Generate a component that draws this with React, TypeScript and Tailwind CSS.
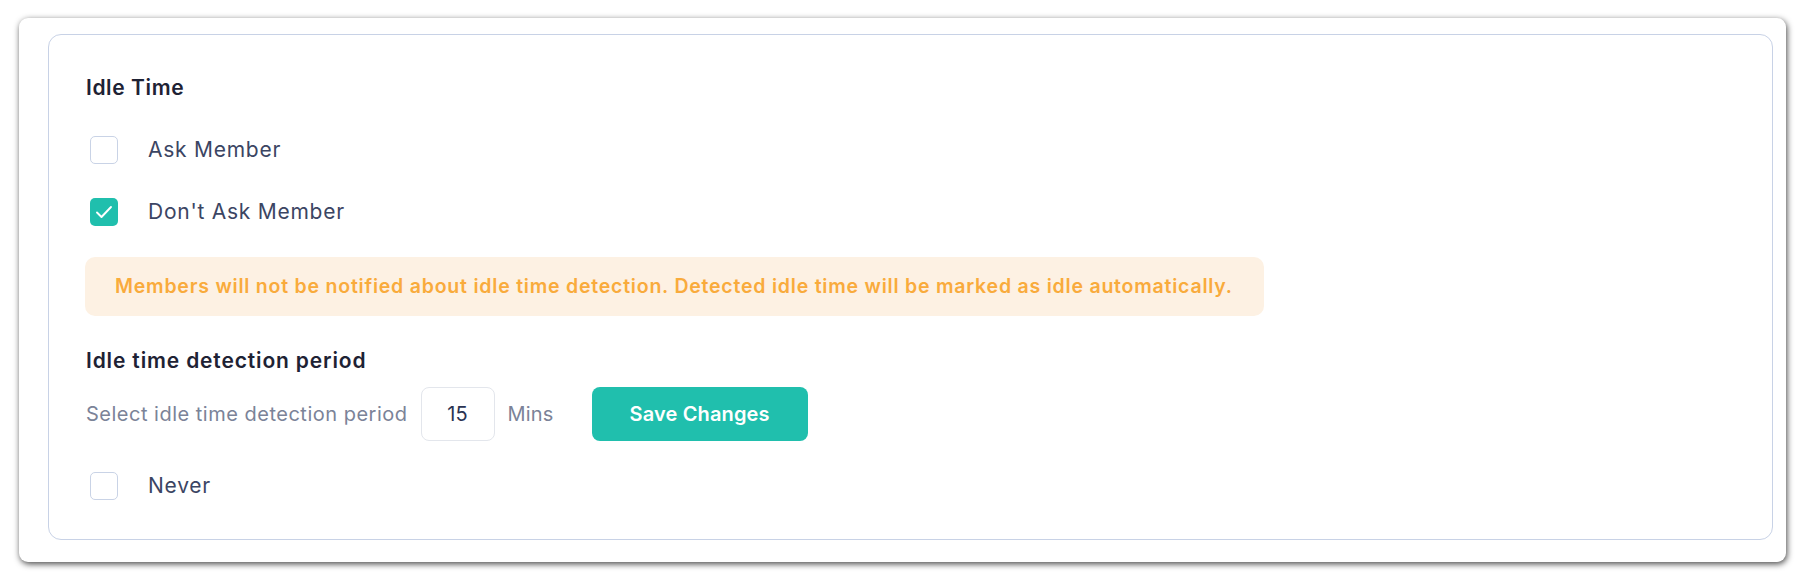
function Box({ checked }: { checked?: boolean }) {
  return checked ? (
    <span className="flex h-[28px] w-[28px] shrink-0 items-center justify-center rounded-[5px] bg-[#20bfad]">
      <svg width="28" height="28" viewBox="0 0 28 28" fill="none">
        <path d="M7 14.5l4.5 4.5 9.5-10" stroke="white" strokeWidth="1.9" strokeLinecap="round" strokeLinejoin="round" />
      </svg>
    </span>
  ) : (
    <span className="block h-[28px] w-[28px] shrink-0 rounded-[5px] border border-[#c9d3e6] bg-white" />
  );
}

export default function App() {
  return (
    <div className="min-h-[582px] bg-white px-[19px] pt-[18px] pb-[19px] font-[Inter,sans-serif]">
      <div className="rounded-[9px] bg-white pl-[29px] pr-[13px] pt-[16px] pb-[22px] shadow-[1px_2px_6px_rgba(0,0,0,0.72)]">
        <div className="rounded-[13px] border border-[#c8d2e6] pl-[37px] pt-[39px] pb-[39px]">
          <div className="flex h-[28px] items-center text-[21px] font-semibold tracking-[0.6px] text-[#1e2234]">
            <span>Idle Time</span>
          </div>
          <div className="mt-[34px] flex h-[28px] items-center pl-[4px]">
            <Box />
            <span className="ml-[30px] text-[21px] tracking-[0.75px] text-[#3b4563]">Ask Member</span>
          </div>
          <div className="mt-[34px] flex h-[28px] items-center pl-[4px]">
            <Box checked />
            <span className="ml-[30px] text-[21px] tracking-[0.75px] text-[#3b4563]">Don't Ask Member</span>
          </div>
          <div className="mt-[31px] -ml-[1px] flex h-[59px] w-[1179px] items-center rounded-[10px] bg-[#fdf1e3] pl-[30px] text-[19.5px] font-semibold tracking-[0.78px] text-[#f9ab3c]">
            <span>Members will not be notified about idle time detection. Detected idle time will be marked as idle automatically.</span>
          </div>
          <div className="mt-[31px] flex h-[28px] items-center text-[21px] font-semibold tracking-[0.85px] text-[#1e2234]">
            <span>Idle time detection period</span>
          </div>
          <div className="mt-[12px] flex h-[54px] items-center">
            <span className="text-[20px] tracking-[0.5px] text-[#7b8398]">Select idle time detection period</span>
            <div className="ml-[13px] flex h-[54px] w-[74px] items-center justify-center rounded-[8px] border border-[#e3e6ec] text-[20px] text-[#2a3352]">
              <span>15</span>
            </div>
            <span className="ml-[13px] text-[20px] tracking-[0.2px] text-[#7b8398]">Mins</span>
            <button className="ml-[38px] flex h-[54px] w-[216px] items-center justify-center rounded-[8px] bg-[#20bfad] text-[20px] font-semibold tracking-[0.15px] text-white">
              <span>Save Changes</span>
            </button>
          </div>
          <div className="mt-[31px] flex h-[28px] items-center pl-[4px]">
            <Box />
            <span className="ml-[30px] text-[21px] tracking-[0.75px] text-[#3b4563]">Never</span>
          </div>
        </div>
      </div>
    </div>
  );
}
